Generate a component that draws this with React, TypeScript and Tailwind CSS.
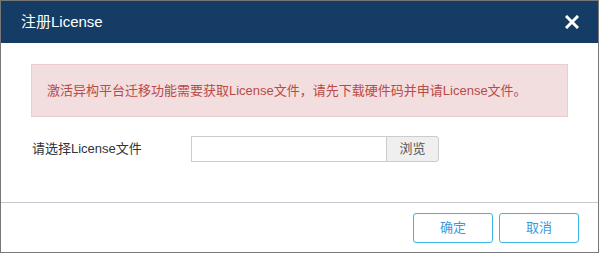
export default function App() {
  const font = { fontFamily: '"Liberation Sans", "Noto Sans CJK SC", sans-serif' }
  return (
    <div className="w-[599px] h-[253px] border border-[#777] bg-white flex flex-col" style={font}>
      {/* 标题栏 */}
      <div className="h-[42px] bg-[#153c64] flex items-center justify-between pl-[20px] pr-[19px] shrink-0">
        <span className="text-white text-[15px]">注册License</span>
        <svg width="14" height="14" viewBox="0 0 14 14">
          <path d="M2 2 L12 12 M12 2 L2 12" stroke="#fff" strokeWidth="3" strokeLinecap="square" />
        </svg>
      </div>

      {/* 内容 */}
      <div className="flex-1 px-[30px] pt-[21px]">
        <div className="h-[53px] bg-[#f2dede] border border-[#ebccd1] flex items-center pl-[15px] text-[#b94a48] text-[13px]">
          激活异构平台迁移功能需要获取License文件，请先下载硬件码并申请License文件。
        </div>
        <div className="flex items-center mt-[19px] text-[13px] text-[#333]">
          <span className="w-[160px] pl-[1px]">请选择License文件</span>
          <div className="flex h-[26px]">
            <input className="w-[196px] border border-[#ccc] outline-none" readOnly />
            <button className="w-[53px] -ml-[1px] border border-[#ccc] rounded-r-[3px] bg-[#efefef] text-[#555] text-[13px]">
              浏览
            </button>
          </div>
        </div>
      </div>

      {/* 底部按钮 */}
      <div className="h-[50px] border-t border-[#c8c6d0] flex items-center justify-end gap-[6px] pr-[19px] pt-[1px] shrink-0">
        <button className="w-[80px] h-[30px] border border-[#3fb2e6] rounded-[3px] text-[#3a9ad9] text-[13px]">确定</button>
        <button className="w-[80px] h-[30px] border border-[#3fb2e6] rounded-[3px] text-[#3a9ad9] text-[13px]">取消</button>
      </div>
    </div>
  )
}
